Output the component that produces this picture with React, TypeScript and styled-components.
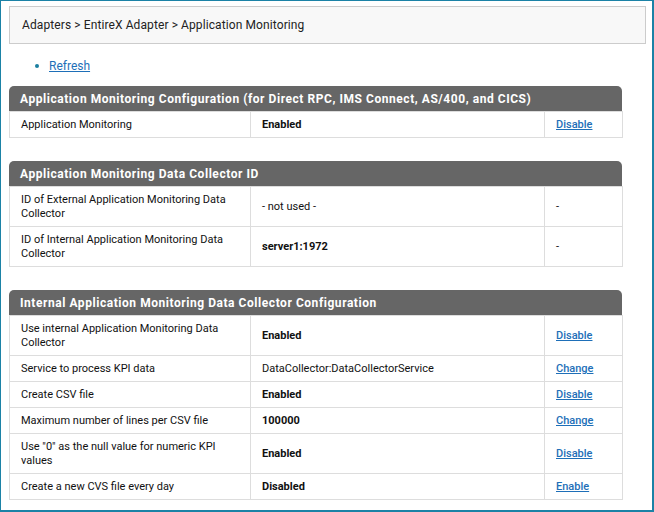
import React from "react";
import styled, { createGlobalStyle } from "styled-components";

const GlobalStyle = createGlobalStyle`
  html, body {
    margin: 0;
    padding: 0;
    background: #ffffff;
  }
  body {
    font-family: Roboto, "Liberation Sans", Arial, sans-serif;
    color: #000;
  }
`;

const Frame = styled.div`
  box-sizing: border-box;
  width: 654px;
  height: 512px;
  border-style: solid;
  border-color: #1b82a6;
  border-width: 1px 2px 2px 1px;
  padding: 5px 6px 0 8px;
  overflow: hidden;
`;

const Breadcrumb = styled.div`
  box-sizing: border-box;
  height: 38px;
  display: flex;
  align-items: center;
  padding: 0 12px;
  background: #f8f8f8;
  border: 1px solid #cccccc;
  font-size: 12px;
  letter-spacing: 0.1px;
  color: #222;
`;

const LinkList = styled.ul`
  margin: 0;
  padding: 15px 0 0 40px;
  height: 27px;
  list-style: none;

  li {
    position: relative;
    font-size: 12px;
    line-height: 14px;
  }
  li::before {
    content: "";
    position: absolute;
    left: -14px;
    top: 5px;
    width: 4px;
    height: 4px;
    border-radius: 50%;
    background: #1b7fa0;
  }
`;

const Link = styled.a<{ $weight?: number }>`
  color: #1e6fb8;
  text-decoration: underline;
  font-weight: ${(p) => p.$weight ?? 400};
  cursor: pointer;
`;

const Section = styled.section`
  width: 613px;
  margin-bottom: 23px;
`;

const Header = styled.div`
  height: 25px;
  display: flex;
  align-items: center;
  padding: 0 11px;
  background: #666666;
  border-radius: 5px 5px 0 0;
  color: #ffffff;
  font-size: 12px;
  font-weight: 700;
  letter-spacing: 0.55px;
  white-space: nowrap;
`;

const Table = styled.table`
  width: 100%;
  border-collapse: collapse;
  table-layout: fixed;
  font-size: 11px;
  line-height: 14px;
`;

const Cell = styled.td<{ $bold?: boolean }>`
  border: 1px solid #dddddd;
  padding: 6px 11px 5px;
  vertical-align: middle;
  font-weight: ${(p) => (p.$bold ? 700 : 400)};
  color: #111;
`;

type Row = {
  label: string;
  value: string;
  bold?: boolean;
  action?: string;
};

const sections: { title: string; rows: Row[] }[] = [
  {
    title:
      "Application Monitoring Configuration (for Direct RPC, IMS Connect, AS/400, and CICS)",
    rows: [{ label: "Application Monitoring", value: "Enabled", bold: true, action: "Disable" }],
  },
  {
    title: "Application Monitoring Data Collector ID",
    rows: [
      { label: "ID of External Application Monitoring Data Collector", value: "- not used -" },
      { label: "ID of Internal Application Monitoring Data Collector", value: " server1:1972", bold: true },
    ],
  },
  {
    title: "Internal Application Monitoring Data Collector Configuration",
    rows: [
      { label: "Use internal Application Monitoring Data Collector", value: "Enabled", bold: true, action: "Disable" },
      { label: "Service to process KPI data", value: "DataCollector:DataCollectorService", action: "Change" },
      { label: "Create CSV file", value: "Enabled", bold: true, action: "Disable" },
      { label: "Maximum number of lines per CSV file", value: "100000", bold: true, action: "Change" },
      { label: 'Use "0" as the null value for numeric KPI values', value: "Enabled", bold: true, action: "Disable" },
      { label: "Create a new CVS file every day", value: "Disabled", bold: true, action: "Enable" },
    ],
  },
];

export default function App() {
  return (
    <>
      <GlobalStyle />
      <Frame>
        <Breadcrumb>Adapters &gt; EntireX Adapter &gt; Application Monitoring</Breadcrumb>
        <LinkList>
          <li>
            <Link>Refresh</Link>
          </li>
        </LinkList>
        {sections.map((s) => (
          <Section key={s.title}>
            <Header>{s.title}</Header>
            <Table>
              <colgroup>
                <col style={{ width: 241 }} />
                <col style={{ width: 294 }} />
                <col style={{ width: 78 }} />
              </colgroup>
              <tbody>
                {s.rows.map((r) => (
                  <tr key={r.label}>
                    <Cell>{r.label}</Cell>
                    <Cell $bold={r.bold}>{r.value}</Cell>
                    <Cell>{r.action ? <Link $weight={500}>{r.action}</Link> : "-"}</Cell>
                  </tr>
                ))}
              </tbody>
            </Table>
          </Section>
        ))}
      </Frame>
    </>
  );
}
